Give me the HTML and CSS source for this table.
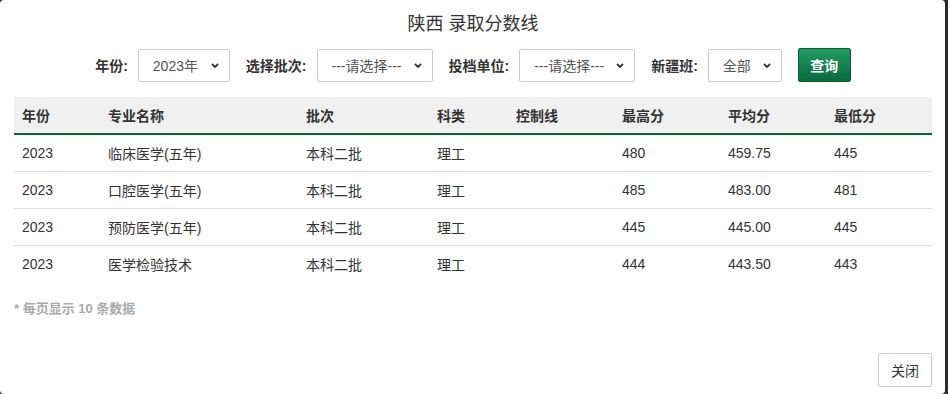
FILE: index.html
```html
<!DOCTYPE html>
<html lang="zh">
<head>
<meta charset="utf-8">
<title>陕西 录取分数线</title>
<link rel="stylesheet" href="styles.css">
</head>
<body>
<div class="modal">
  <h1 class="title">陕西 录取分数线</h1>
  <div class="filters">
    <label class="lbl">年份:</label>
    <div class="sel sel-year"><span>2023年</span><svg class="chev" viewBox="0 0 8 5" width="8" height="5"><path d="M1 1l3 3 3-3" fill="none" stroke="#333" stroke-width="1.8"/></svg></div>
    <label class="lbl">选择批次:</label>
    <div class="sel sel-wide"><span>---请选择---</span><svg class="chev" viewBox="0 0 8 5" width="8" height="5"><path d="M1 1l3 3 3-3" fill="none" stroke="#333" stroke-width="1.8"/></svg></div>
    <label class="lbl">投档单位:</label>
    <div class="sel sel-wide"><span>---请选择---</span><svg class="chev" viewBox="0 0 8 5" width="8" height="5"><path d="M1 1l3 3 3-3" fill="none" stroke="#333" stroke-width="1.8"/></svg></div>
    <label class="lbl">新疆班:</label>
    <div class="sel sel-small"><span>全部</span><svg class="chev" viewBox="0 0 8 5" width="8" height="5"><path d="M1 1l3 3 3-3" fill="none" stroke="#333" stroke-width="1.8"/></svg></div>
    <button class="btn-query">查询</button>
  </div>
  <table class="grid">
    <colgroup>
      <col style="width:86px"><col style="width:198px"><col style="width:131px"><col style="width:79px">
      <col style="width:106px"><col style="width:106px"><col style="width:106px"><col style="width:106px">
    </colgroup>
    <thead>
      <tr><th>年份</th><th>专业名称</th><th>批次</th><th>科类</th><th>控制线</th><th>最高分</th><th>平均分</th><th>最低分</th></tr>
    </thead>
    <tbody>
      <tr><td>2023</td><td>临床医学(五年)</td><td>本科二批</td><td>理工</td><td></td><td>480</td><td>459.75</td><td>445</td></tr>
      <tr><td>2023</td><td>口腔医学(五年)</td><td>本科二批</td><td>理工</td><td></td><td>485</td><td>483.00</td><td>481</td></tr>
      <tr><td>2023</td><td>预防医学(五年)</td><td>本科二批</td><td>理工</td><td></td><td>445</td><td>445.00</td><td>445</td></tr>
      <tr><td>2023</td><td>医学检验技术</td><td>本科二批</td><td>理工</td><td></td><td>444</td><td>443.50</td><td>443</td></tr>
    </tbody>
  </table>
  <p class="note">* 每页显示 10 条数据</p>
  <div class="footer"><button class="btn-close">关闭</button></div>
</div>
</body>
</html>
```
FILE: styles.css
```css
* { box-sizing: border-box; }
html, body { margin: 0; padding: 0; }
body {
  background: #2a2f2d;
  width: 948px;
  height: 394px;
  overflow: hidden;
  font-family: "Liberation Sans", "Noto Sans CJK SC", sans-serif;
  color: #333;
  font-size: 14px;
}
.modal {
  width: 945px;
  height: 394px;
  background: #fff;
  border-radius: 4px;
  padding: 0 13px 0 14px;
  display: flex;
  flex-direction: column;
}
.title {
  margin: 13px 0 0;
  font-size: 18px;
  font-weight: normal;
  line-height: 22px;
  text-align: center;
  color: #333;
}
.filters {
  margin-top: 13px;
  display: flex;
  align-items: center;
  justify-content: center;
  height: 34px;
}
.lbl {
  font-weight: bold;
  font-size: 14px;
  color: #333;
  margin-right: 10px;
}
.sel {
  height: 33px;
  border: 1px solid #ccc;
  border-radius: 2px;
  display: flex;
  align-items: center;
  justify-content: space-between;
  padding: 0 10px 0 14px;
  margin-right: 16px;
  color: #555;
  font-size: 14px;
}
.sel-year { width: 92px; }
.sel-wide { width: 116px; }
.sel-small { width: 74px; }
.chev { flex: none; }
.btn-query {
  width: 53px;
  height: 34px;
  border: 1px solid #0a5c36;
  border-radius: 2px;
  background: linear-gradient(#229a62, #0b6a3e);
  color: #fff;
  font-family: inherit;
  font-size: 14px;
  font-weight: bold;
  padding: 0;
}
.grid {
  margin-top: 15px;
  width: 918px;
  border-collapse: collapse;
  table-layout: fixed;
}
.grid th {
  background: #f0f0f0;
  height: 37px;
  padding: 0 8px;
  text-align: left;
  font-weight: bold;
  font-size: 14px;
  border-bottom: 2px solid #0c5f3b;
}
.grid td {
  height: 37px;
  padding: 0 8px;
  border-bottom: 1px solid #ddd;
  font-size: 14px;
  color: #333;
}
.grid tbody tr:last-child td { border-bottom: none; }
.note {
  margin: 19px 0 0;
  font-size: 13px;
  font-weight: bold;
  color: #aaa;
  line-height: 16px;
}
.footer {
  margin-top: 36px;
  display: flex;
  justify-content: flex-end;
}
.btn-close {
  width: 54px;
  height: 34px;
  background: #fff;
  border: 1px solid #ccc;
  border-radius: 2px;
  font-family: inherit;
  font-size: 14px;
  color: #333;
  padding: 0;
}
```
